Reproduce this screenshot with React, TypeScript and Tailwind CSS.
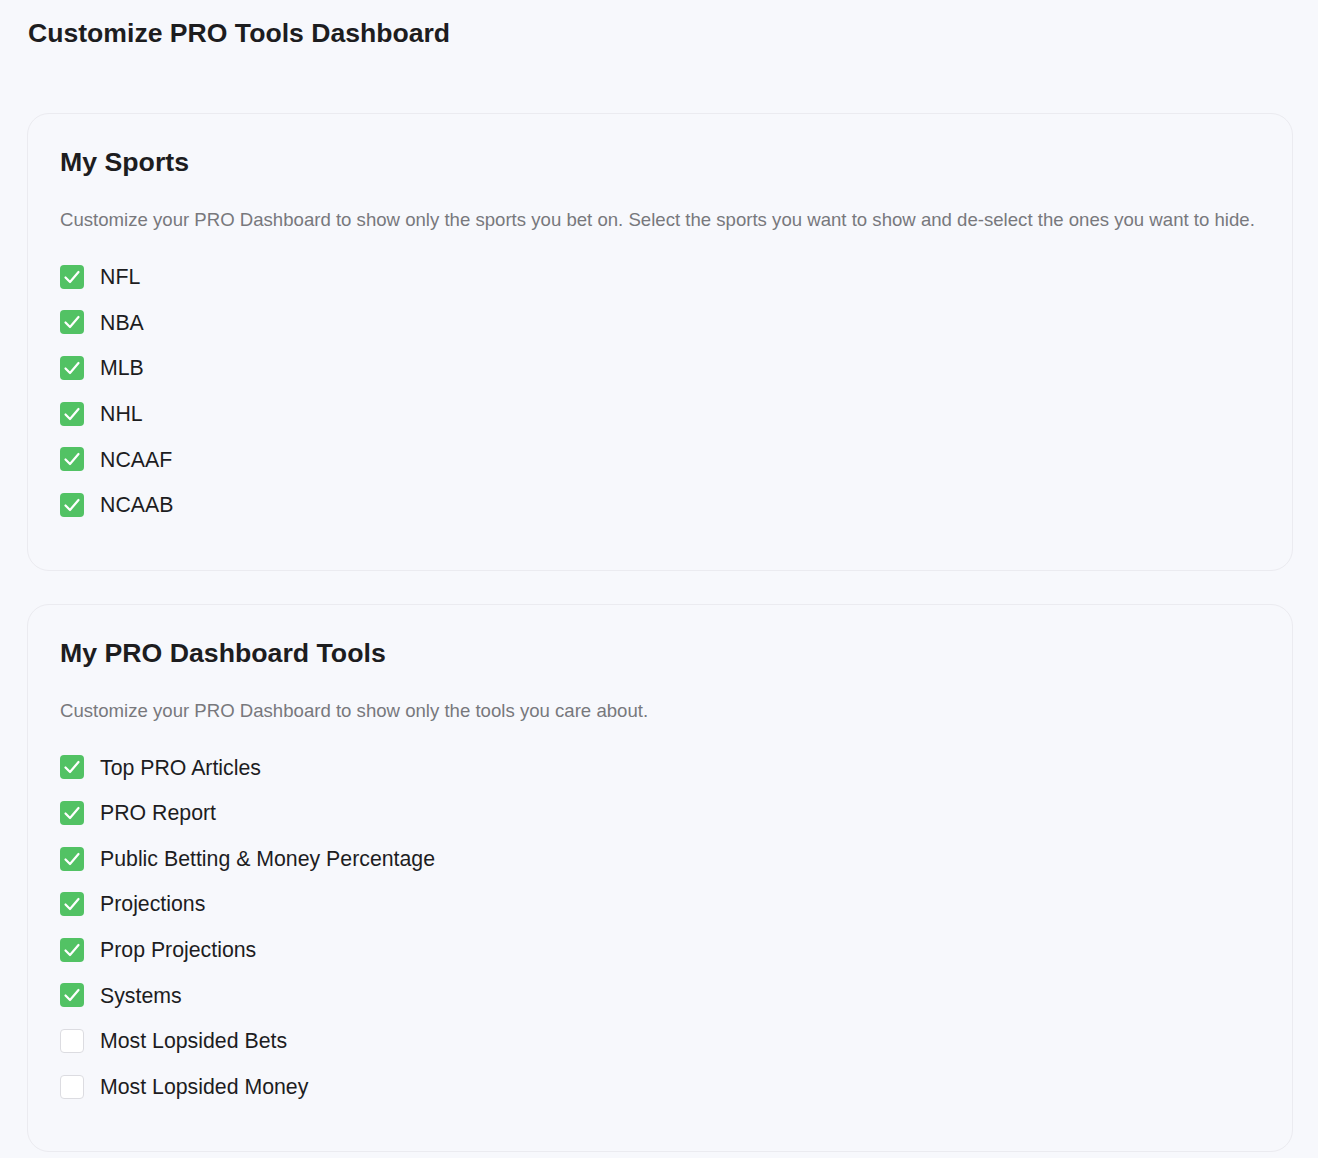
const sports = [
  { label: 'NFL', checked: true },
  { label: 'NBA', checked: true },
  { label: 'MLB', checked: true },
  { label: 'NHL', checked: true },
  { label: 'NCAAF', checked: true },
  { label: 'NCAAB', checked: true },
]

const tools = [
  { label: 'Top PRO Articles', checked: true },
  { label: 'PRO Report', checked: true },
  { label: 'Public Betting & Money Percentage', checked: true },
  { label: 'Projections', checked: true },
  { label: 'Prop Projections', checked: true },
  { label: 'Systems', checked: true },
  { label: 'Most Lopsided Bets', checked: false },
  { label: 'Most Lopsided Money', checked: false },
]

function CheckRow({ label, checked }: { label: string; checked: boolean }) {
  return (
    <label className="flex h-[45.6px] cursor-pointer items-center gap-4">
      {checked ? (
        <span className="flex h-6 w-6 items-center justify-center rounded-[4px] bg-[#52c264]">
          <svg viewBox="0 0 24 24" className="h-6 w-6" fill="none">
            <path
              d="M5.5 12.5L10 17L18.5 7"
              stroke="white"
              strokeWidth={2.2}
              strokeLinecap="round"
              strokeLinejoin="round"
            />
          </svg>
        </span>
      ) : (
        <span className="h-6 w-6 rounded-[4px] border border-[#dcdce1] bg-white" />
      )}
      <span className="pt-[2px] text-[21.3px] leading-none text-[#1d1d1f]">{label}</span>
    </label>
  )
}

function Section({
  title,
  description,
  items,
}: {
  title: string
  description: string
  items: { label: string; checked: boolean }[]
}) {
  return (
    <section className="rounded-[22px] border border-[#ebebf0] bg-[#f7f8fc] px-8 pt-8 pb-[42px]">
      <h2 className="text-[26.7px] leading-8 font-bold text-[#1d1d1f]">{title}</h2>
      <p className="mt-[28px] text-[18.6px] leading-[27px] text-[#78787d]">{description}</p>
      <div className="mt-[21px] flex flex-col">
        {items.map((item) => (
          <CheckRow key={item.label} label={item.label} checked={item.checked} />
        ))}
      </div>
    </section>
  )
}

export default function App() {
  return (
    <div
      className="min-h-screen bg-[#f7f8fc] pt-[17px] pr-[25px] pl-[27px] pb-8"
      style={{ fontFamily: '"Liberation Sans", Arial, sans-serif' }}
    >
      <h1 className="pl-px text-[26.6px] leading-8 font-bold text-[#1d1d1f]">Customize PRO Tools Dashboard</h1>
      <div className="mt-16 flex flex-col gap-[33px]">
        <Section
          title="My Sports"
          description="Customize your PRO Dashboard to show only the sports you bet on. Select the sports you want to show and de-select the ones you want to hide."
          items={sports}
        />
        <Section
          title="My PRO Dashboard Tools"
          description="Customize your PRO Dashboard to show only the tools you care about."
          items={tools}
        />
      </div>
    </div>
  )
}
